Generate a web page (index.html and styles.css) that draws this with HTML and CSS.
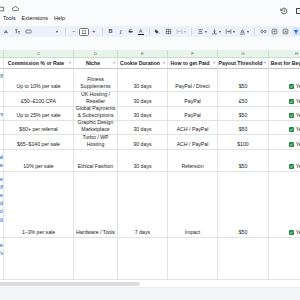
FILE: index.html
```html
<!DOCTYPE html>
<html lang="en">
<head>
  <meta charset="UTF-8">
  <meta name="viewport" content="width=device-width, initial-scale=1.0">
  <title>Affiliate Programs - Sheet</title>
  <link rel="stylesheet" href="styles.css">
</head>
<body>
  <div class="topbar">
    <svg class="ico folder" viewBox="0 0 12 12"><path d="M-2 3h4l1 1h5v6h-10z" fill="none" stroke="#444746" stroke-width="1.3"/></svg>
    <svg class="ico cloud" viewBox="0 0 12 12"><path d="M3 9.5h6.2a2.2 2.2 0 0 0 0-4.4 3.2 3.2 0 0 0-6.1-.6A2.5 2.5 0 0 0 3 9.5z" fill="none" stroke="#444746" stroke-width="1.2"/></svg>
    <div class="spacer"></div>
    <svg class="ico history" viewBox="0 0 12 12"><path d="M2.2 4.5A4.2 4.2 0 1 1 2 7" fill="none" stroke="#444746" stroke-width="1.3"/><path d="M1 2.5v2.8h2.8" fill="none" stroke="#444746" stroke-width="1.2"/><path d="M6.2 3.6v2.8l1.8 1.1" fill="none" stroke="#444746" stroke-width="1.2"/></svg>
    <div class="edge-icon"></div>
  </div>

  <div class="menubar">
    <span>Tools</span>
    <span>Extensions</span>
    <span>Help</span>
  </div>

  <div class="toolbar">
    <svg class="tb" viewBox="0 0 12 12"><path d="M2 9l3-5 3 5M3 7.5h4" fill="none" stroke="#444746" stroke-width="1.2"/></svg>
    <svg class="tb" viewBox="0 0 12 12"><path d="M2 3h4M4 3v6M7 6h3M8.5 6v4" fill="none" stroke="#444746" stroke-width="1.2"/></svg>
    <svg class="tb" viewBox="0 0 12 12"><rect x="1.5" y="3.5" width="9" height="5" rx="1" fill="none" stroke="#444746" stroke-width="1.1"/></svg>
    <div class="font-select"><span class="caret"></span></div>
    <span class="sep"></span>
    <span class="tb-btn">&minus;</span>
    <span class="size-box">11</span>
    <span class="tb-btn">+</span>
    <span class="sep"></span>
    <span class="tb-btn bold">B</span>
    <span class="tb-btn italic">I</span>
    <span class="tb-btn strike">S</span>
    <span class="tb-btn color-a">A</span>
    <span class="sep"></span>
    <svg class="tb" viewBox="0 0 12 12"><path d="M3 2l5 5-3 3-4-4z" fill="#444746"/><path d="M9.5 7.5c.8 1 .8 2 0 2s-.8-1 0-2z" fill="#444746"/></svg>
    <svg class="tb" viewBox="0 0 12 12"><rect x="2" y="2" width="8" height="8" fill="none" stroke="#444746" stroke-width="1"/><path d="M6 2v8M2 6h8" stroke="#444746" stroke-width="1"/></svg>
    <svg class="tb" viewBox="0 0 12 12"><path d="M2 2v8M10 2v8M3.5 6h5" fill="none" stroke="#9aa0a6" stroke-width="1.1"/></svg>
    <span class="caret dimmed"></span>
    <span class="sep"></span>
    <svg class="tb" viewBox="0 0 12 12"><path d="M2 3h8M3.5 6h5M2 9h8" stroke="#444746" stroke-width="1.2"/></svg>
    <span class="caret"></span>
    <svg class="tb" viewBox="0 0 12 12"><path d="M2 10h8M6 2v6M4 6l2 2 2-2" fill="none" stroke="#444746" stroke-width="1.2"/></svg>
    <span class="caret"></span>
    <svg class="tb" viewBox="0 0 12 12"><path d="M2 2v8M10 2v8M3.5 6h5M6.5 4l2 2-2 2" fill="none" stroke="#444746" stroke-width="1.1"/></svg>
    <span class="caret"></span>
    <svg class="tb" viewBox="0 0 12 12"><path d="M3 9l3-6 3 6M4 7h4M2 10.5h8" fill="none" stroke="#444746" stroke-width="1.1"/></svg>
    <span class="caret"></span>
    <span class="sep"></span>
    <svg class="tb" viewBox="0 0 12 12"><path d="M5 4H3.5a2 2 0 0 0 0 4H5M7 4h1.5a2 2 0 0 1 0 4H7M4.5 6h3" fill="none" stroke="#444746" stroke-width="1.2"/></svg>
    <svg class="tb" viewBox="0 0 12 12"><rect x="2" y="2" width="8" height="8" rx="1" fill="none" stroke="#444746" stroke-width="1.1"/><path d="M6 4v4M4 6h4" stroke="#444746" stroke-width="1"/></svg>
    <svg class="tb" viewBox="0 0 12 12"><rect x="2" y="2" width="8" height="8" rx="1" fill="none" stroke="#444746" stroke-width="1.1"/><path d="M4 8V6M6 8V4M8 8V5" stroke="#444746" stroke-width="1"/></svg>
    <span class="filter-btn"><svg viewBox="0 0 12 12"><path d="M1.5 2.5h9L7 6.5V10L5 9V6.5z" fill="#0b57d0"/></svg></span>
  </div>

  <div class="formula-gap"></div>

  <div class="sheet" id="sheet"></div>

  <div class="hscroll"><div class="thumb"></div></div>
  <div class="bottombar"></div>

  <script>
    const letters = ['', 'C', 'D', 'E', 'F', 'G', 'H'];
    const headers = ['', 'Commission % or Rate', 'Niche', 'Cookie Duration', 'How to get Paid', 'Payout Threshold', 'Best for Beginners'];
    const rows = [
      ['fitness.com/aff', 'Up to 10% per sale', 'Fitness<br>Supplements', '30 days', 'PayPal / Direct', '$50', true],
      ['', '£50–£100 CPA', 'UK Hosting /<br>Reseller', '30 days', 'PayPal', '£50', true],
      ['pay.com/partners', 'Up to 25% per sale', 'Global Payments<br>&amp; Subscriptions', '30 days', 'PayPal', '$50', true],
      ['', '$60+ per referral', 'Graphic Design<br>Marketplace', '30 days', 'ACH / PayPal', '$50', true],
      ['', '$65–$140 per sale', 'Turbo / WP<br>Hosting', '90 days', 'ACH / PayPal', '$100', true],
      ['https://www.ethical<br>fashion.example<br>/affiliates/join', '10% per sale', 'Ethical Fashion', '30 days', 'Refersion', '$50', true],
      ['https://tools.example<br>.com/program/aff<br>iliate-signup/page<br>?ref=partner&amp;id<br>=2024/index/a/b/<br>landing', '1–3% per sale', 'Hardware / Tools', '7 days', 'Impact', '$50', true],
      ['https://more.example<br>/x', '', '', '', '', '', false]
    ];

    const sheet = document.getElementById('sheet');

    letters.forEach(l => {
      const c = document.createElement('div');
      c.className = 'cell letter';
      c.textContent = l;
      sheet.appendChild(c);
    });

    headers.forEach((h, i) => {
      const c = document.createElement('div');
      c.className = 'cell head';
      if (i > 0) {
        c.innerHTML = `<span class="head-text">${h}</span><span class="filter"></span>`;
      }
      sheet.appendChild(c);
    });

    rows.forEach(r => {
      r.forEach((v, i) => {
        const c = document.createElement('div');
        c.className = 'cell';
        if (i === 0) {
          c.classList.add('link');
          c.innerHTML = `<span>${v}</span>`;
        } else if (i === 6) {
          c.classList.add('check-cell');
          if (v) c.innerHTML = '<span class="check"><svg viewBox="0 0 10 10"><path d="M2.2 5.2l1.8 1.8 3.8-3.8" fill="none" stroke="#fff" stroke-width="1.6"/></svg></span>Yes';
        } else {
          c.innerHTML = `<span>${v}</span>`;
        }
        sheet.appendChild(c);
      });
    });
  </script>
</body>
</html>
```

FILE: styles.css
```css
* {
  box-sizing: border-box;
}
body {
  margin: 0;
  width: 300px;
  height: 300px;
  overflow: hidden;
  background: #f9fbfd;
  font-family: "Liberation Sans", Arial, sans-serif;
  color: #202124;
}
.topbar {
  height: 13px;
  display: flex;
  align-items: flex-start;
  padding-top: 5px;
}
.ico {
  width: 7px;
  height: 7px;
}
.folder {
  margin-left: -1px;
}
.cloud {
  margin-left: 6px;
}
.spacer {
  flex: 1;
}
.history {
  margin-top: 2px;
  width: 8px;
  height: 8px;
  margin-right: 8px;
}
.edge-icon {
  width: 4px;
  height: 6px;
  margin-top: 3px;
  border: 1px solid #444746;
  border-right: none;
  border-radius: 1px 0 0 1px;
}
.menubar {
  height: 10px;
  display: flex;
  align-items: center;
  gap: 6px;
  padding-left: 3px;
  font-size: 5.4px;
  color: #202124;
}
.toolbar {
  margin-top: 3px;
  height: 11px;
  display: flex;
  align-items: center;
  background: #edf2fa;
  border-radius: 0 6px 6px 0;
  padding-left: 1px;
  color: #444746;
  font-size: 6px;
}
.tb {
  width: 7px;
  height: 7px;
  margin: 0 2px;
  flex-shrink: 0;
}
.font-select {
  width: 34px;
  height: 9px;
  margin-left: 3px;
  display: flex;
  align-items: center;
  justify-content: flex-end;
  padding-right: 2px;
}
.caret {
  width: 0;
  height: 0;
  border-left: 1.5px solid transparent;
  border-right: 1.5px solid transparent;
  border-top: 2px solid #444746;
  margin-right: 2px;
  margin-left: -1px;
  flex-shrink: 0;
}
.caret.dimmed {
  border-top-color: #9aa0a6;
}
.sep {
  width: 1px;
  height: 7px;
  background: #c7c7c7;
  margin: 0 3px;
  opacity: 0.6;
}
.tb-btn {
  width: 10px;
  text-align: center;
  font-size: 6px;
  line-height: 9px;
  flex-shrink: 0;
}
.size-box {
  width: 13px;
  height: 8px;
  border: 1px solid #747775;
  border-radius: 1.5px;
  font-size: 5px;
  line-height: 6px;
  text-align: center;
  color: #202124;
  background: #fff;
}
.bold {
  font-weight: bold;
  font-size: 5.5px;
}
.italic {
  font-style: italic;
  font-family: "Liberation Serif", serif;
  font-size: 6.5px;
}
.strike {
  text-decoration: line-through;
  font-size: 6px;
}
.color-a {
  font-size: 5.5px;
  line-height: 6px;
  border-bottom: 1.5px solid #000;
  width: 6px;
  margin: 0 2px;
}
.filter-btn {
  margin-left: 2px;
  width: 10px;
  height: 9px;
  background: #d3e3fd;
  border-radius: 2px;
  display: flex;
  align-items: center;
  justify-content: center;
}
.filter-btn svg {
  width: 6px;
  height: 6px;
}
.formula-gap {
  height: 13px;
}
.sheet {
  display: grid;
  grid-template-columns: 4px 70px 44px 50px 50px 51px 56px;
  grid-template-rows: 8px 11px 23px 15px 14px 14px 15px 22px 66px 42px;
  width: 330px;
  background: #fff;
  overflow: hidden;
}
.cell {
  border-right: 1px solid #e2e3e3;
  border-bottom: 1px solid #e2e3e3;
  display: flex;
  flex-direction: column;
  justify-content: flex-end;
  align-items: center;
  text-align: center;
  padding-bottom: 1px;
  font-size: 5.2px;
  line-height: 7px;
  color: #222;
  white-space: nowrap;
}
.letter {
  background: #e6f4ea;
  border-right-color: #c9dccd;
  border-bottom-color: #c9dccd;
  justify-content: center;
  padding: 0;
  font-size: 4.2px;
  color: #5f6368;
}
.head {
  flex-direction: row;
  align-items: center;
  justify-content: flex-start;
  padding: 0;
  overflow: hidden;
  border-bottom-color: #c4c7c5;
  font-weight: bold;
  font-size: 5.2px;
  color: #202124;
}
.head-text {
  flex: 1;
  min-width: 0;
  overflow: hidden;
  text-align: center;
  white-space: nowrap;
}
.filter {
  width: 0;
  height: 0;
  margin: 0 2px 0 1px;
  flex-shrink: 0;
  border-left: 1.5px solid transparent;
  border-right: 1.5px solid transparent;
  border-top: 2px solid #9aa0a6;
}
.link {
  overflow: hidden;
  align-items: flex-end;
  justify-content: flex-start;
  padding: 3px 0 0;
  color: #1155cc;
  text-align: right;
  line-height: 8px;
}
.check-cell {
  flex-direction: row;
  justify-content: center;
  align-items: flex-end;
  gap: 2px;
  padding-bottom: 2px;
  line-height: 5px;
  overflow: hidden;
}
.check {
  width: 5px;
  height: 5px;
  background: #1e8e3e;
  border-radius: 1px;
  display: flex;
  align-items: center;
  justify-content: center;
}
.check svg {
  width: 5px;
  height: 5px;
}
.hscroll {
  height: 8px;
  background: #fff;
  padding-top: 2px;
  border-bottom: 1px solid #eceef0;
}
.thumb {
  width: 140px;
  height: 4px;
  background: #dadce0;
  border-radius: 0 2px 2px 0;
}
.bottombar {
  height: 12px;
  background: #f3f5f8;
}
```
